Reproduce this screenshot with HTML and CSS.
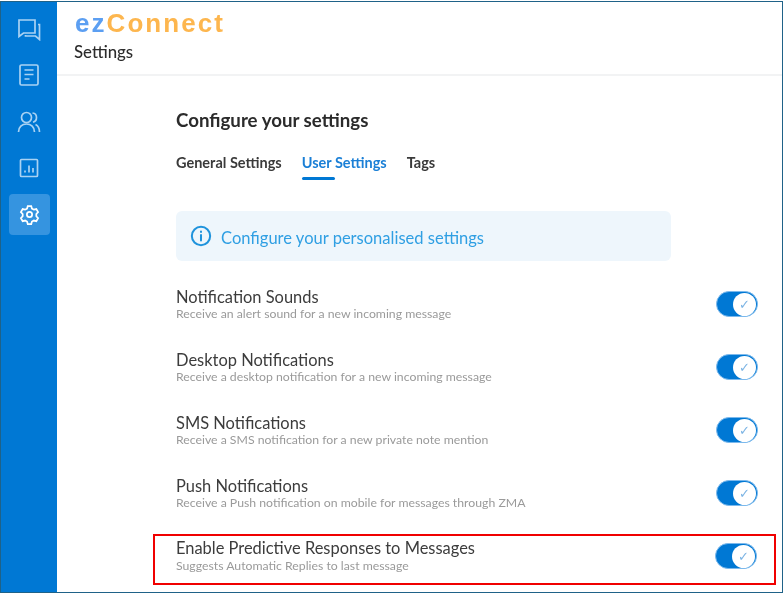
FILE: index.html
```html
<!DOCTYPE html>
<html lang="en">
<head>
  <meta charset="UTF-8" />
  <title>ezConnect Settings</title>
  <link rel="stylesheet" href="styles.css">
</head>
<body>
  <div class="window">
    <!-- Sidebar -->
    <nav class="sidebar">
      <a class="nav-item">
        <svg viewBox="0 0 24 24" width="24" height="24"><path d="M2 3h16v13H6.500L2 19.500z"/><path d="M21 7.500h1.500v15l-4-3.500H8.500v-1"/></svg>
      </a>
      <a class="nav-item">
        <svg viewBox="0 0 24 24" width="24" height="24"><rect x="3" y="2" width="18" height="20" rx="1.500"/><path d="M7.500 7h9M7.500 11.500h9M7.500 16h5"/></svg>
      </a>
      <a class="nav-item">
        <svg viewBox="0 0 24 24" width="24" height="24"><circle cx="9.500" cy="7.500" r="5"/><path d="M1.500 22c0-5 3.500-8 8-8s8 3 8 8"/><path d="M15.500 3c2.500.3 4 2.200 4 4.500s-1.500 4.200-3.500 4.700M18.500 14.500c2.500 1.200 4 4 4 7.500"/></svg>
      </a>
      <a class="nav-item">
        <svg viewBox="0 0 24 24" width="24" height="24"><rect x="3.500" y="3.500" width="17" height="17" rx="1"/><path d="M8 16.500v-2M12 16.500v-7M16 16.500v-4.500"/></svg>
      </a>
      <a class="nav-item active">
        <svg viewBox="0 0 24 24" width="21" height="21"><path d="M10 2.500h4l.8 2.800 2.200 1.200 2.800-.7 2 3.500-2 2.100v2.600l2 2.100-2 3.500-2.800-.7-2.200 1.200-.8 2.800h-4l-.8-2.800-2.200-1.200-2.800.7-2-3.500 2-2.100v-2.600l-2-2.100 2-3.500 2.800.7 2.200-1.200z"/><circle cx="12" cy="12" r="3"/></svg>
      </a>
    </nav>

    <div class="main">
      <header class="topbar">
        <div class="logo"><span class="logo-ez">ez</span><span class="logo-connect">Connect</span></div>
        <div class="page-name">Settings</div>
      </header>

      <section class="content">
        <h1>Configure your settings</h1>
        <div class="tabs">
          <a class="tab">General Settings</a>
          <a class="tab active">User Settings</a>
          <a class="tab">Tags</a>
        </div>

        <div class="notice">
          <svg viewBox="0 0 24 24" width="22" height="22"><circle cx="12" cy="12" r="10"/><path d="M12 11v6"/><path d="M12 7v.5"/></svg>
          <span>Configure your personalised settings</span>
        </div>

        <div class="setting">
          <div>
            <div class="setting-title">Notification Sounds</div>
            <div class="setting-desc">Receive an alert sound for a new incoming message</div>
          </div>
          <span class="toggle"><span class="knob">&#10003;</span></span>
        </div>
        <div class="setting">
          <div>
            <div class="setting-title">Desktop Notifications</div>
            <div class="setting-desc">Receive a desktop notification for a new incoming message</div>
          </div>
          <span class="toggle"><span class="knob">&#10003;</span></span>
        </div>
        <div class="setting">
          <div>
            <div class="setting-title">SMS Notifications</div>
            <div class="setting-desc">Receive a SMS notification for a new private note mention</div>
          </div>
          <span class="toggle"><span class="knob">&#10003;</span></span>
        </div>
        <div class="setting">
          <div>
            <div class="setting-title">Push Notifications</div>
            <div class="setting-desc">Receive a Push notification on mobile for messages through ZMA</div>
          </div>
          <span class="toggle"><span class="knob">&#10003;</span></span>
        </div>
        <div class="setting highlighted">
          <div>
            <div class="setting-title">Enable Predictive Responses to Messages</div>
            <div class="setting-desc">Suggests Automatic Replies to last message</div>
          </div>
          <span class="toggle"><span class="knob">&#10003;</span></span>
        </div>
      </section>
    </div>
  </div>
</body>
</html>
```

FILE: styles.css
```css
* {
  box-sizing: border-box;
  margin: 0;
  padding: 0;
  font-family: 'Lato', sans-serif;
}

body {
  background: #fff;
  width: 784px;
  height: 594px;
  padding-top: 1px;
  overflow: hidden;
}

.window {
  display: flex;
  width: 783px;
  height: 592px;
  border: 1px solid #1f6288;
  overflow: hidden;
  filter: blur(0.35px);
}

.sidebar {
  width: 56px;
  flex-shrink: 0;
  background-color: #0078d4;
  display: flex;
  flex-direction: column;
  align-items: center;
  gap: 5.5px;
  padding-top: 6px;
}

.nav-item {
  width: 41px;
  height: 41px;
  border-radius: 4px;
  display: flex;
  align-items: center;
  justify-content: center;
}

.nav-item.active {
  background-color: #3594e0;
}

.nav-item svg {
  fill: none;
  stroke: #a9d2f3;
  stroke-width: 1.7;
}

.nav-item.active svg {
  stroke: #fff;
  stroke-width: 2;
}

.main {
  flex: 1;
  min-width: 0;
}

.topbar {
  height: 74px;
  padding: 8px 0 0 18px;
  border-bottom: 2px solid #f2f3f4;
}

.logo {
  font-family: 'Liberation Sans', sans-serif;
  font-size: 26px;
  line-height: 26px;
  font-weight: 700;
  letter-spacing: 2.05px;
}

.logo-ez {
  font-family: inherit;
  color: #5c9ff2;
}

.logo-connect {
  font-family: inherit;
  color: #fdb64e;
}

.page-name {
  margin: 6px 0 0 -1px;
  font-size: 16.8px;
  line-height: 20px;
  font-weight: 500;
  color: #2c2c2c;
}

.content {
  padding: 32px 0 0 119px;
}

h1 {
  font-size: 18.7px;
  line-height: 24px;
  font-weight: 700;
  color: #2b2b2b;
}

.tabs {
  display: flex;
  gap: 20px;
  margin-top: 22px;
}

.tab {
  font-size: 14.5px;
  line-height: 18px;
  font-weight: 700;
  color: #3a3a3a;
  padding-bottom: 8px;
  position: relative;
}

.tab.active {
  color: #1a7fd6;
}

.tab.active::after {
  content: '';
  display: block;
  position: absolute;
  left: 0;
  bottom: 0;
  width: 33px;
  height: 3px;
  border-radius: 2px;
  background-color: #0078d4;
}

.notice {
  width: 495px;
  height: 50px;
  margin-top: 31px;
  padding-left: 14px;
  background-color: #eef6fc;
  border-radius: 6px;
  display: flex;
  align-items: center;
  gap: 9px;
  font-size: 16.55px;
  color: #2f9fe3;
}

.notice span {
  padding-top: 4px;
}

.notice svg {
  fill: none;
  stroke: #1f93dc;
  stroke-width: 2.2;
  stroke-linecap: round;
}

.setting {
  display: flex;
  align-items: center;
  justify-content: space-between;
  width: 582px;
  height: 40px;
  margin-bottom: 23px;
}

.notice + .setting {
  margin-top: 23px;
}

.setting-title {
  margin: 1px 0 -1px;
  font-size: 16.45px;
  line-height: 19px;
  color: #3c3c3c;
}

.setting-desc {
  font-size: 12.25px;
  line-height: 15px;
  color: #9a9a9a;
}

.setting.highlighted {
  width: 623px;
  height: 51px;
  margin: -2px 0 0 -23px;
  padding: 0 17px 7px 21px;
  border: 2px solid #f00000;
}

.highlighted .setting-title {
  margin: 0;
}

.toggle {
  width: 42px;
  height: 26px;
  border-radius: 13px;
  background-color: #0078d4;
  border: 1px solid #7cb9ec;
  display: flex;
  align-items: center;
  justify-content: flex-end;
  padding-right: 1px;
}

.knob {
  width: 23px;
  height: 23px;
  border-radius: 50%;
  background-color: #fff;
  color: #7cb4e4;
  font-size: 13px;
  line-height: 23px;
  text-align: center;
  font-family: 'DejaVu Sans', sans-serif;
}
```
